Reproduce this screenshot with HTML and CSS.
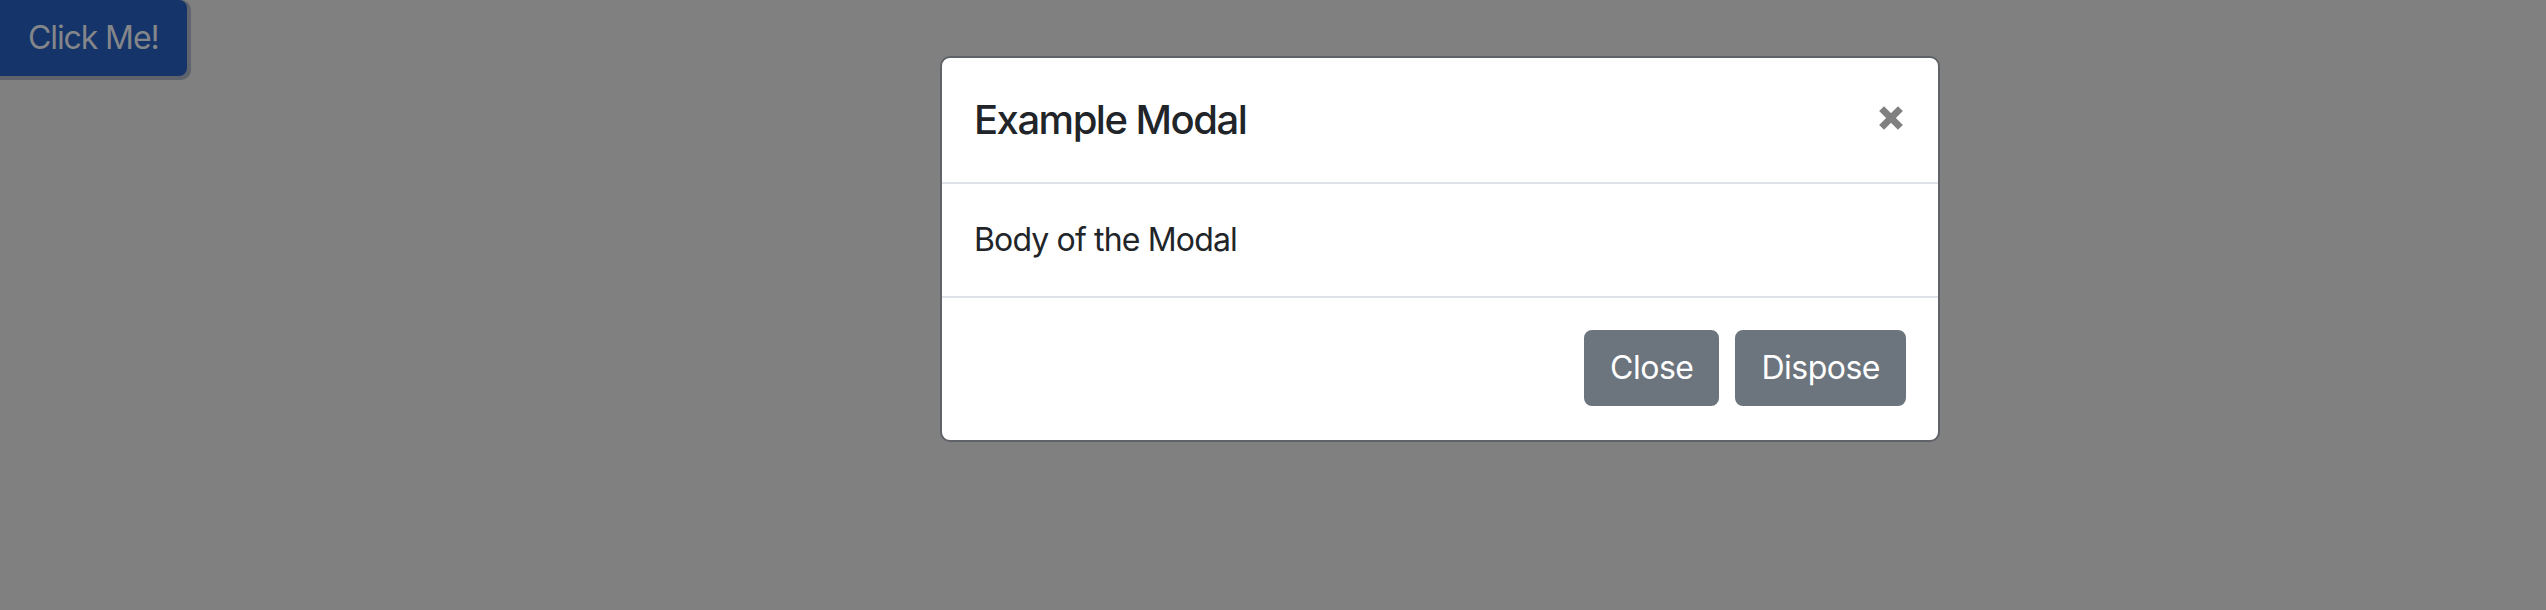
FILE: index.html
```html
<!DOCTYPE html>
<html lang="en">
<head>
<meta charset="utf-8">
<title>Modal</title>
<link rel="stylesheet" href="styles.css">
</head>
<body>
<button class="btn btn-trigger" type="button">Click Me!</button>
<div class="modal">
  <div class="modal-content">
    <div class="modal-header">
      <h5 class="modal-title">Example Modal</h5>
      <button class="close" type="button" aria-label="Close">
        <svg width="24" height="24" viewBox="0 0 24 24" aria-hidden="true">
          <line x1="2.6" y1="2.6" x2="21.4" y2="21.4" />
          <line x1="21.4" y1="2.6" x2="2.6" y2="21.4" />
        </svg>
      </button>
    </div>
    <div class="modal-body">Body of the Modal</div>
    <div class="modal-footer">
      <button class="btn btn-secondary" type="button">Close</button>
      <button class="btn btn-secondary" type="button">Dispose</button>
    </div>
  </div>
</div>
</body>
</html>
```
FILE: styles.css
```css
* { box-sizing: border-box; }

html, body {
  margin: 0;
  padding: 0;
}

body {
  background: #808080;
  font-family: Inter, "Liberation Sans", Arial, sans-serif;
  color: #212529;
  min-height: 610px;
}

.btn {
  display: inline-block;
  font-family: inherit;
  font-size: 32px;
  font-weight: 400;
  line-height: 48px;
  padding: 12px 24px;
  border: 2px solid transparent;
  border-radius: 8px;
  cursor: pointer;
  white-space: nowrap;
  letter-spacing: -0.5px;
}

.btn-trigger {
  margin: 0;
  background: #15346a;
  border-color: #15346a;
  color: #848689;
  box-shadow: 2px 2px 0 2px #5e636c;
  border-top-left-radius: 0;
  border-bottom-left-radius: 0;
  padding: 12px 26px;
  letter-spacing: -1.1px;
}

.modal {
  position: absolute;
  left: 940px;
  top: 56px;
  width: 1000px;
}

.modal-content {
  background: #fff;
  border: 2px solid #5f6266;
  border-radius: 10px;
  display: flex;
  flex-direction: column;
}

.modal-header {
  display: flex;
  align-items: flex-start;
  justify-content: space-between;
  padding: 32px;
  border-bottom: 2px solid #dee2e6;
}

.modal-title {
  margin: 0;
  font-size: 40px;
  font-weight: 500;
  line-height: 60px;
  color: #212529;
  letter-spacing: -1.5px;
}

.close {
  background: transparent;
  border: 0;
  padding: 0;
  margin: 16px 3px 0 0;
  width: 24px;
  height: 24px;
  display: flex;
  cursor: pointer;
}

.close svg line {
  stroke: #808080;
  stroke-width: 7;
  stroke-linecap: butt;
}

.modal-body {
  padding: 32px;
  font-size: 32px;
  line-height: 48px;
  letter-spacing: -0.85px;
}

.modal-footer {
  display: flex;
  justify-content: flex-end;
  align-items: center;
  padding: 24px 24px 26px 24px;
  border-top: 2px solid #dee2e6;
}

.modal-footer .btn {
  margin: 8px;
}

.btn-secondary {
  background: #6c757d;
  border-color: #6c757d;
  color: #fff;
}
```
